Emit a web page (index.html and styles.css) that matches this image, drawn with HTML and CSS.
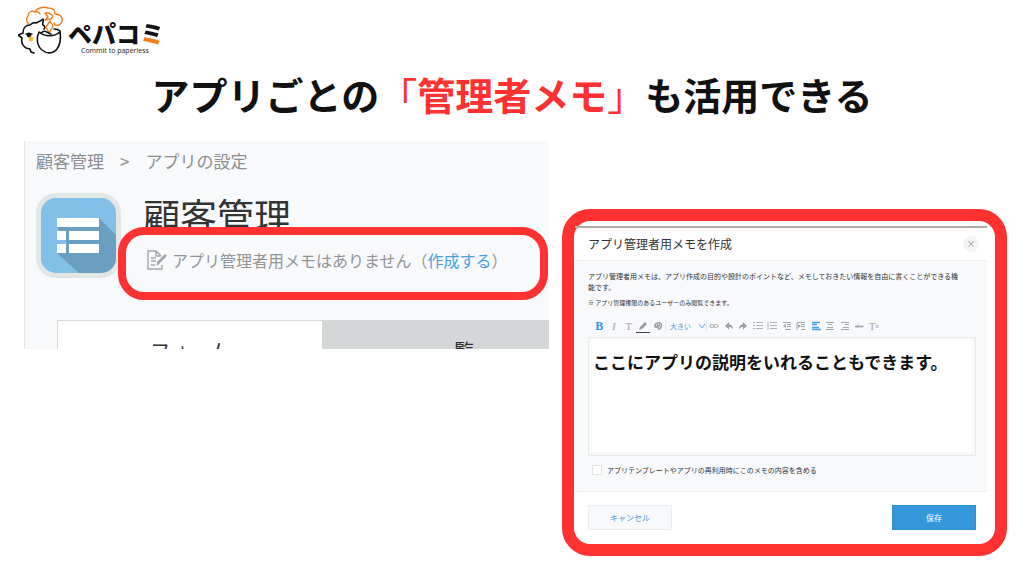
FILE: index.html
```html
<!DOCTYPE html>
<html lang="ja">
<head>
<meta charset="utf-8">
<title>アプリごとの「管理者メモ」も活用できる</title>
<link rel="stylesheet" href="styles.css">
</head>
<body>
<header class="brand">
  <svg class="brand-mark" viewBox="0 0 48 50" width="48" height="50" fill="none" stroke-linecap="round" stroke-linejoin="round" aria-hidden="true">
    <path d="M11 18c-3-2-3-6-1-8 0-4 4-6 7-4 2-1 4 0 5 2M17 6c2-4 8-6 13-4 5 0 7 3 7 6 5 0 8 3 7 7-1 4-4 5-7 4l-1-2" stroke="#f07d1a" stroke-width="1.4"/>
    <path d="M27 7h4l4 3-2 3-6 1 3-3zM32 15l3 5-4 7-3-6z" stroke="#f07d1a" stroke-width="1.4"/>
    <path d="M5 27c0-5 3-8 7-8 2-2 4-3 6-2 2-1 5-2 7-4 1 2-1 4 0 6 2 1 2 3 1 4M5 27l-5 2 4 3c-1 4 0 7 4 10l4 1 1 3 3 1" stroke="#111" stroke-width="1.6"/>
    <path d="M21 26c-3 6-2 14 3 18 5 4 11 4 15-1 3-4 4-11 3-18-2-2-4-2-6-2M21 26c6 5 15 5 21 0M23 27c4-4 6 0 10 1" stroke="#111" stroke-width="1.6"/>
    <circle cx="11" cy="29" r="2.4" fill="#111"/>
    <path d="M8 28l6 0" stroke="#111" stroke-width="1.4"/>
    <circle cx="13" cy="33" r="2.4" fill="#ffbd22"/>
  </svg>
  <div class="brand-text">
    <div class="brand-name">ペパコ<span class="brand-accent">ミ</span></div>
    <div class="brand-tag">Commit to paperless</div>
  </div>
</header>

<h1 class="headline">アプリごとの<em><span class="mark">「</span>管理者メモ<span class="mark">」</span></em>も活用できる</h1>

<main class="shots">
  <section class="app">
    <nav class="crumbs"><span>顧客管理</span><span>&gt;</span><span>アプリの設定</span></nav>
    <div class="app-row">
      <svg class="app-icon" viewBox="0 0 85 85" width="85" height="85" aria-hidden="true">
        <rect width="85" height="85" rx="20" fill="#e1e6e7"/>
        <clipPath id="tile"><rect x="5" y="5" width="75" height="75" rx="15"/></clipPath>
        <g clip-path="url(#tile)">
          <rect x="5" y="5" width="75" height="75" fill="#83c0e7"/>
          <path d="M63 25l17 17v38H43L21 60l10-10-10-16z" fill="#6b9fc2"/>
        </g>
        <path d="M21 25h42v9H21zM21 38h9v9h-9zM33 38h30v9H33zM21 51h9v9h-9zM33 51h30v9H33z" fill="#fff"/>
      </svg>
      <div class="app-info">
        <h2 class="app-name">顧客管理</h2>
        <div class="memo">
          <svg class="memo-icon" viewBox="0 0 20 20" width="20" height="20" fill="none" stroke="#a3a6a7" stroke-width="1.4" aria-hidden="true">
            <path d="M15 15v4H1V1h8l5 5M9 1v5h5M4 8h5M4 11h5M4 15h4"/>
            <path d="M10 15l1-3 7-7 1 1-7 7z" fill="#a3a6a7"/>
          </svg>
          <span>アプリ管理者用メモはありません（<a href="#dialog">作成する</a>）</span>
        </div>
      </div>
    </div>
    <div class="tabs"><div class="tab tab-on">フォーム</div><div class="tab">一覧</div></div>
  </section>

  <section class="frame">
    <form class="dialog" id="dialog">
      <div class="dialog-head">
        <h3>アプリ管理者用メモを作成</h3>
        <button class="close" type="button" aria-label="閉じる">×</button>
      </div>
      <div class="dialog-body">
        <p class="lead">アプリ管理者用メモは、アプリ作成の目的や設計のポイントなど、メモしておきたい情報を自由に書くことができる機<br>能です。</p>
        <p class="note">※ アプリ管理権限のあるユーザーのみ閲覧できます。</p>
        <div class="toolbar">
          <div class="tools tools-font">
            <button type="button" class="glyph bold">B</button>
            <button type="button" class="glyph italic">I</button>
            <button type="button" class="glyph">T</button>
            <button type="button" class="color" aria-label="文字色"><svg viewBox="0 0 10 10" width="10" height="10"><path d="M1 9l1-3 5-5 2 2-5 5z" fill="#969a9c"/></svg></button>
            <button type="button" aria-label="背景色"><svg viewBox="0 0 10 10" width="10" height="10"><path d="M1 5c0-3 3-4 5-4s4 2 3 5c-1 2-2 3-4 3 0-2-1-2-2-2S1 6 1 5z" fill="#a3a6a8"/><path d="M3 4h1M5 3h1M7 4h1M6 6h1" stroke="#fff"/></svg></button>
          </div>
          <div class="size">
            <select aria-label="文字サイズ"><option>大きい</option></select>
            <svg viewBox="0 0 8 6" width="8" height="6" fill="none" stroke="#5fade0" aria-hidden="true"><path d="M1 1l3 4 3-4"/></svg>
          </div>
          <div class="tools tools-para">
            <button type="button" aria-label="リンク"><svg viewBox="0 0 10 10" width="10" height="10" fill="none" stroke="#a3a6a8"><rect x="1" y="3.5" width="4" height="3" rx="1.5"/><rect x="5" y="3.5" width="4" height="3" rx="1.5"/></svg></button>
            <button type="button" aria-label="元に戻す"><svg viewBox="0 0 10 10" width="10" height="10"><path d="M1 5l4-4v2.500c3 0 4 2 4 5-1-2-2-2.500-4-2.500v2.500z" fill="#9a9da0"/></svg></button>
            <button type="button" aria-label="やり直す"><svg viewBox="0 0 10 10" width="10" height="10"><path d="M9 5L5 1v2.500c-3 0-4 2-4 5 1-2 2-2.500 4-2.500v2.500z" fill="#9a9da0"/></svg></button>
            <button type="button" aria-label="箇条書き"><svg viewBox="0 0 10 10" width="10" height="10" stroke="#b0b3b5"><path d="M0 1.500h2M3 1.500h7M0 4.500h2M3 4.500h7M0 7.500h2M3 7.500h7"/></svg></button>
            <button type="button" aria-label="番号付き"><svg viewBox="0 0 10 10" width="10" height="10" stroke="#b0b3b5"><path d="M1 1v8M3 1.500h7M3 4.500h7M3 7.500h7"/></svg></button>
            <button type="button" aria-label="字下げ解除"><svg viewBox="0 0 10 10" width="10" height="10" stroke="#a3a6a8"><path d="M1 1.500h8M5 3.500h4M5 5.500h4M5 8.500h4M3 8.500H5"/><path d="M4 3L1 5l3 2z" fill="#a3a6a8" stroke="none"/></svg></button>
            <button type="button" aria-label="字下げ"><svg viewBox="0 0 10 10" width="10" height="10" stroke="#a3a6a8"><path d="M1 1.500h8M5 3.500h4M5 5.500h4M5 8.500h4M1 2v7"/><path d="M2 3l3 2-3 2z" fill="#a3a6a8" stroke="none"/></svg></button>
            <button type="button" aria-label="左揃え"><svg viewBox="0 0 10 10" width="10" height="10" stroke="#49a3e0" stroke-width="1.4"><path d="M1 1.500h8M1 3.500h5M1 6.500h7M1 8.500h9"/></svg></button>
            <button type="button" aria-label="中央揃え"><svg viewBox="0 0 10 10" width="10" height="10" stroke="#a3a6a8"><path d="M1 1.500h8M3 3.500h4M2 6.500h6M1 8.500h8"/></svg></button>
            <button type="button" aria-label="右揃え"><svg viewBox="0 0 10 10" width="10" height="10" stroke="#a3a6a8"><path d="M1 1.500h8M5 3.500h4M3 6.500h6M1 8.500h8"/></svg></button>
            <button type="button" class="glyph strike">abc</button>
            <button type="button" class="glyph clear">T<sub>x</sub></button>
          </div>
        </div>
        <textarea class="editor" aria-label="メモ">ここにアプリの説明をいれることもできます。</textarea>
        <label class="check"><input type="checkbox">アプリテンプレートやアプリの再利用時にこのメモの内容を含める</label>
      </div>
      <div class="dialog-foot">
        <button class="btn" type="button">キャンセル</button>
        <button class="btn primary" type="submit">保存</button>
      </div>
    </form>
  </section>
</main>
</body>
</html>
```

FILE: styles.css
```css
* { box-sizing: border-box; }
body {
  margin: 0;
  background: #fff;
  color: #333;
  font-family: "Noto Sans CJK JP", sans-serif;
  overflow-x: hidden;
}
h1, h2, h3, p { margin: 0; font-weight: 400; }
button, select, textarea { font-family: inherit; margin: 0; padding: 0; border: 0; background: none; }
a { color: #4aa0dd; text-decoration: none; }

.brand { display: flex; gap: 2px; padding: 6px 0 0 18px; }
.brand-mark { display: block; }
.brand-text { padding-top: 14px; }
.brand-name { font-size: 24px; line-height: 26px; font-weight: 900; color: #111; }
.brand-accent {
  background: linear-gradient(#111 62%, #f07d1a 62%);
  background-clip: text;
  color: transparent;
}
.brand-tag { padding-left: 13px; font: 7px/10px "Open Sans", sans-serif; color: #222; }

.headline {
  padding-top: 14px;
  font-size: 38px;
  line-height: 48px;
  font-weight: 700;
  text-align: center;
  white-space: nowrap;
  color: #111;
}
.headline em { font-style: normal; color: #ff3131; }
.mark { font-weight: 400; }

.shots {
  display: grid;
  grid-template-columns: 525fr 445fr;
  gap: 13px;
  align-items: start;
  padding: 23px 17px 20px 24px;
}

.app {
  min-width: 0;
  padding-top: 8px;
  border-left: 1px solid #e2e5e7;
  background: #f7f9fb;
}
.crumbs { display: flex; gap: 16px; padding-left: 11px; font-size: 17px; line-height: 24px; color: #8c8f90; }
.app-row { display: flex; gap: 22px; padding: 20px 1px 20px 11px; }
.app-icon { flex: none; }
.app-info { flex: 1; padding-top: 4px; }
.app-name { font-size: 37px; line-height: 37px; color: #333; }
.memo {
  position: relative;
  display: flex;
  align-items: center;
  gap: 5px;
  margin: -7px 0 0 -25px;
  padding: 13px 21px 20px;
  border: 8px solid #ff3131;
  border-radius: 26px;
  background: #f7f9fb;
  font-size: 16px;
  line-height: 24px;
  white-space: nowrap;
  color: #929596;
}
.memo-icon { flex: none; }
.tabs { display: flex; height: 29px; margin-left: 32px; border-top: 1px solid #d5d9da; border-left: 1px solid #d5d9da; overflow: hidden; }
.tab { flex: none; width: 264px; padding-top: 18px; background: #d3d7d8; font-size: 20px; line-height: 24px; text-align: center; }
.tab-on { background: #fff; }

.frame { min-width: 0; margin-top: 68px; padding: 5px 8px 0 1px; border: 12px solid #ff3131; border-radius: 28px; }
.dialog { border-top: 2px solid #b3aaa3; }
.dialog-head { display: flex; align-items: center; justify-content: space-between; height: 32px; padding: 0 8px 0 13px; }
.dialog-head h3 { font-size: 12px; line-height: 16px; }
.close { width: 16px; height: 16px; border-radius: 8px; background: #f3f5f7; color: #8c8f90; font-size: 9px; line-height: 16px; }
.dialog-body { padding: 10px 11px 15px 13px; border: solid #eceff1; border-width: 1px 0; background: #f7f9fb; }
.lead { font-size: 7px; line-height: 11px; white-space: nowrap; }
.note { padding-top: 4px; font-size: 6px; line-height: 11px; }

.toolbar { display: flex; align-items: center; height: 14px; margin: 11px 0 4px 4px; }
.tools { display: grid; }
.tools-font { width: 73px; grid-template-columns: repeat(5, 1fr); }
.tools-para { width: 174px; grid-template-columns: repeat(12, 1fr); }
.tools button { display: flex; align-items: center; justify-content: center; height: 14px; }
.tools .glyph { font: 11px "Liberation Serif", serif; color: #a0a3a5; }
.tools .bold { font-size: 12px; color: #2f98dc; font-weight: 700; }
.tools .italic { font-style: italic; }
.tools .strike { font-size: 6px; text-decoration: line-through; }
.glyph sub { font-size: 7px; }
.tools .color { border-bottom: 1px solid #444; }
.size { display: flex; align-items: center; width: 42px; padding-left: 4px; border: solid #e6eaec; border-width: 0 1px; }
.size select { width: 28px; appearance: none; color: #4aa0dd; font-size: 7px; line-height: 12px; }

.editor {
  display: block;
  width: 100%;
  height: 119px;
  padding: 11px 4px;
  border: 1px solid #e6eaea;
  background: #fff;
  box-shadow: inset 0 0 5px #eef0f0;
  font-size: 17px;
  line-height: 25px;
  font-weight: 700;
  color: #111;
  resize: none;
}
.check { display: flex; align-items: center; gap: 5px; padding: 8px 0 0 4px; font-size: 7px; line-height: 12px; }
.check input { appearance: none; width: 10px; height: 10px; margin: 0; border: 1px solid #e0e4e5; background: #fff; }

.dialog-foot { display: flex; justify-content: space-between; padding: 13px 11px 14px 13px; }
.btn { width: 84px; height: 25px; border: 1px solid #e9edef; background: #f7f9fb; color: #4aa0dd; font-size: 8px; }
.primary { border-color: #2a90d8; background: #3498db; color: #fff; }
```
